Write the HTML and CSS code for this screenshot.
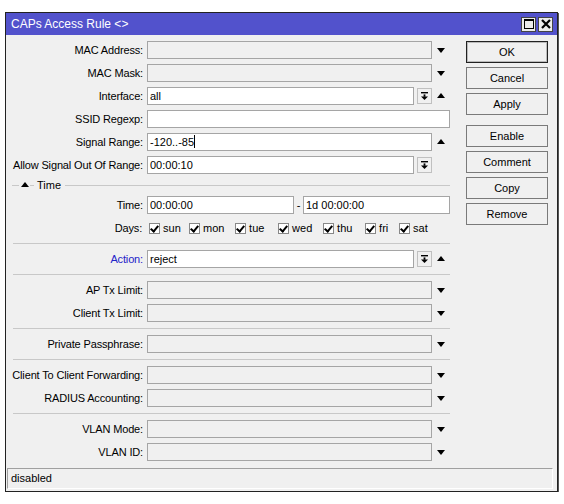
FILE: index.html
```html
<!DOCTYPE html>
<html lang="en">
<head>
    <meta charset="UTF-8">
    <title>CAPs Access Rule</title>
    <link rel="stylesheet" href="styles.css">
</head>
<body>
    <div class="window">
        <div class="titlebar">
            <span class="title">CAPs Access Rule &lt;&gt;</span>
            <div class="title-buttons">
                <span class="tbtn">
                    <svg width="10" height="10" viewBox="0 0 10 10"><rect x="0.5" y="0.5" width="9" height="9" fill="none" stroke="#000"/><rect x="0" y="0" width="10" height="2" fill="#000"/></svg>
                </span>
                <span class="tbtn">
                    <svg width="10" height="10" viewBox="0 0 10 10"><path d="M1 1 L9 9 M9 1 L1 9" stroke="#000" stroke-width="2.2"/></svg>
                </span>
            </div>
        </div>

        <div class="content">
            <div class="form">
                <div class="row">
                    <label>MAC Address:</label>
                    <div class="field"><div class="input dis"></div><span class="arrow down"></span></div>
                </div>
                <div class="row">
                    <label>MAC Mask:</label>
                    <div class="field"><div class="input dis"></div><span class="arrow down"></span></div>
                </div>
                <div class="row">
                    <label>Interface:</label>
                    <div class="field"><div class="input">all</div><span class="drop"><svg width="7" height="8" viewBox="0 0 7 8"><rect x="0" y="0" width="7" height="1.4" fill="#000"/><rect x="2.6" y="2.4" width="1.8" height="2.4" fill="#000"/><path d="M0 4.4 H7 L3.5 8 Z" fill="#000"/></svg></span><span class="arrow up"></span></div>
                </div>
                <div class="row">
                    <label>SSID Regexp:</label>
                    <div class="field"><div class="input"></div></div>
                </div>
                <div class="row">
                    <label>Signal Range:</label>
                    <div class="field"><div class="input">-120..-85<span class="caret"></span></div><span class="arrow up"></span></div>
                </div>
                <div class="row">
                    <label>Allow Signal Out Of Range:</label>
                    <div class="field"><div class="input">00:00:10</div><span class="drop"><svg width="7" height="8" viewBox="0 0 7 8"><rect x="0" y="0" width="7" height="1.4" fill="#000"/><rect x="2.6" y="2.4" width="1.8" height="2.4" fill="#000"/><path d="M0 4.4 H7 L3.5 8 Z" fill="#000"/></svg></span><span class="arrow blank"></span></div>
                </div>

                <div class="group">
                    <span class="gline short"></span>
                    <span class="arrow up small"></span>
                    <span class="gline tiny"></span>
                    <span class="gtitle">Time</span>
                    <span class="gline"></span>
                </div>

                <div class="row">
                    <label>Time:</label>
                    <div class="field"><div class="input">00:00:00</div><span class="dash">-</span><div class="input">1d 00:00:00</div></div>
                </div>
                <div class="row">
                    <label>Days:</label>
                    <div class="field days">
                        <span class="day"><span class="check"></span>sun</span>
                        <span class="day"><span class="check"></span>mon</span>
                        <span class="day"><span class="check"></span>tue</span>
                        <span class="day"><span class="check"></span>wed</span>
                        <span class="day"><span class="check"></span>thu</span>
                        <span class="day"><span class="check"></span>fri</span>
                        <span class="day"><span class="check"></span>sat</span>
                    </div>
                </div>

                <div class="sep"></div>

                <div class="row">
                    <label class="blue">Action:</label>
                    <div class="field"><div class="input">reject</div><span class="drop"><svg width="7" height="8" viewBox="0 0 7 8"><rect x="0" y="0" width="7" height="1.4" fill="#000"/><rect x="2.6" y="2.4" width="1.8" height="2.4" fill="#000"/><path d="M0 4.4 H7 L3.5 8 Z" fill="#000"/></svg></span><span class="arrow up"></span></div>
                </div>

                <div class="sep"></div>

                <div class="row">
                    <label>AP Tx Limit:</label>
                    <div class="field"><div class="input dis"></div><span class="arrow down"></span></div>
                </div>
                <div class="row">
                    <label>Client Tx Limit:</label>
                    <div class="field"><div class="input dis"></div><span class="arrow down"></span></div>
                </div>

                <div class="sep"></div>

                <div class="row">
                    <label>Private Passphrase:</label>
                    <div class="field"><div class="input dis"></div><span class="arrow down"></span></div>
                </div>

                <div class="sep"></div>

                <div class="row">
                    <label>Client To Client Forwarding:</label>
                    <div class="field"><div class="input dis"></div><span class="arrow down"></span></div>
                </div>
                <div class="row">
                    <label>RADIUS Accounting:</label>
                    <div class="field"><div class="input dis"></div><span class="arrow down"></span></div>
                </div>

                <div class="sep"></div>

                <div class="row">
                    <label>VLAN Mode:</label>
                    <div class="field"><div class="input dis"></div><span class="arrow down"></span></div>
                </div>
                <div class="row">
                    <label>VLAN ID:</label>
                    <div class="field"><div class="input dis"></div><span class="arrow down"></span></div>
                </div>
            </div>

            <div class="buttons">
                <button class="btn default">OK</button>
                <button class="btn">Cancel</button>
                <button class="btn">Apply</button>
                <button class="btn spaced">Enable</button>
                <button class="btn">Comment</button>
                <button class="btn">Copy</button>
                <button class="btn">Remove</button>
            </div>
        </div>

        <div class="status">disabled</div>
    </div>
</body>
</html>
```

FILE: styles.css
```css
body {
    margin: 0;
    background-color: #fff;
    font-family: "Liberation Sans", Arial, sans-serif;
    font-size: 11px;
    color: #000;
}

.window {
    width: 551px;
    height: 478px;
    margin: 12px 0 0 5px;
    border: 1px solid #222;
    background-color: #f0f0f0;
    display: flex;
    flex-direction: column;
    box-shadow: 1px 1px 0 #555;
}

.titlebar {
    height: 22px;
    background-color: #5252cc;
    display: flex;
    align-items: center;
    justify-content: space-between;
    padding: 0 4px 0 5px;
}

.title {
    color: #fff;
    font-size: 12px;
}

.title-buttons {
    display: flex;
    gap: 2px;
}

.tbtn {
    width: 13px;
    height: 13px;
    background-color: #ececec;
    border: 1px solid #444;
    display: flex;
    align-items: center;
    justify-content: center;
}

.content {
    flex: 1;
    display: flex;
    padding-top: 6px;
}

.form {
    width: 440px;
    padding-left: 4px;
    display: flex;
    flex-direction: column;
}

.row {
    display: flex;
    height: 18px;
    margin-bottom: 5px;
    align-items: center;
}

.row label {
    width: 137px;
    padding-right: 4px;
    text-align: right;
    white-space: nowrap;
    box-sizing: border-box;
    letter-spacing: -0.15px;
}

.row label.blue {
    color: #2323c8;
}

.field {
    width: 303px;
    height: 18px;
    display: flex;
    align-items: center;
}

.input {
    flex: 1;
    height: 18px;
    box-sizing: border-box;
    border: 1px solid #a5a5a5;
    background-color: #fff;
    padding: 0 2px;
    line-height: 16px;
    white-space: nowrap;
    overflow: hidden;
}

.input.dis {
    background-color: #f0f0f0;
}

.caret {
    display: inline-block;
    width: 1px;
    height: 13px;
    background-color: #000;
    vertical-align: -2px;
}

.dash {
    width: 9px;
    text-align: center;
}

.arrow {
    width: 18px;
    height: 18px;
    position: relative;
}

.arrow.down::after,
.arrow.up::after {
    content: "";
    position: absolute;
    left: 5px;
    top: 7px;
    border-left: 4px solid transparent;
    border-right: 4px solid transparent;
}

.arrow.down::after {
    border-top: 5px solid #000;
}

.arrow.up::after {
    border-bottom: 5px solid #000;
    top: 6px;
}

.drop {
    width: 15px;
    height: 16px;
    margin-left: 3px;
    box-sizing: border-box;
    border: 1px solid #c0c0c0;
    display: flex;
    align-items: center;
    justify-content: center;
}

.group {
    display: flex;
    align-items: center;
    height: 12px;
    margin: 0 0 5px 2px;
}

.gline {
    flex: 1;
    height: 1px;
    background-color: #c8c8c8;
}

.gline.short {
    flex: none;
    width: 7px;
}

.gline.tiny {
    flex: none;
    width: 4px;
}

.arrow.small {
    width: 9px;
    height: 12px;
    margin-left: 2px;
}

.arrow.small::after {
    left: 0;
    top: 3px;
}

.gtitle {
    padding: 0 4px 0 3px;
}

.days {
    padding-left: 3px;
}

.day {
    display: flex;
    align-items: center;
    gap: 3px;
    flex: none;
}

.day:nth-child(1) { width: 40px; }
.day:nth-child(2) { width: 46px; }
.day:nth-child(3) { width: 43px; }
.day:nth-child(4) { width: 45px; }
.day:nth-child(5) { width: 42px; }
.day:nth-child(6) { width: 34px; }

.check {
    width: 11px;
    height: 11px;
    box-sizing: border-box;
    border: 1px solid #888;
    background-color: #fff;
    position: relative;
}

.check::after {
    content: "";
    position: absolute;
    left: 2px;
    top: 0;
    width: 3px;
    height: 6px;
    border-right: 2px solid #000;
    border-bottom: 2px solid #000;
    transform: rotate(40deg);
}

.sep {
    height: 1px;
    margin: 1px 0 6px 3px;
    width: 437px;
    background-color: #c8c8c8;
}

.buttons {
    display: flex;
    flex-direction: column;
    gap: 4px;
    margin-left: 16px;
}

.btn {
    width: 82px;
    height: 22px;
    background-color: #f0f0f0;
    border: 1px solid #7a7a7a;
    font-family: "Liberation Sans", Arial, sans-serif;
    font-size: 11px;
    color: #000;
    padding: 0;
}

.btn.default {
    border: 1px solid #222;
    box-shadow: inset 0 0 0 1px #bbb;
}

.btn.spaced {
    margin-top: 6px;
}

.status {
    height: 19px;
    margin: 0 4px 2px 1px;
    border: 1px solid #a0a0a0;
    border-right-color: #fff;
    border-bottom-color: #fff;
    padding-left: 3px;
    line-height: 19px;
}
```
